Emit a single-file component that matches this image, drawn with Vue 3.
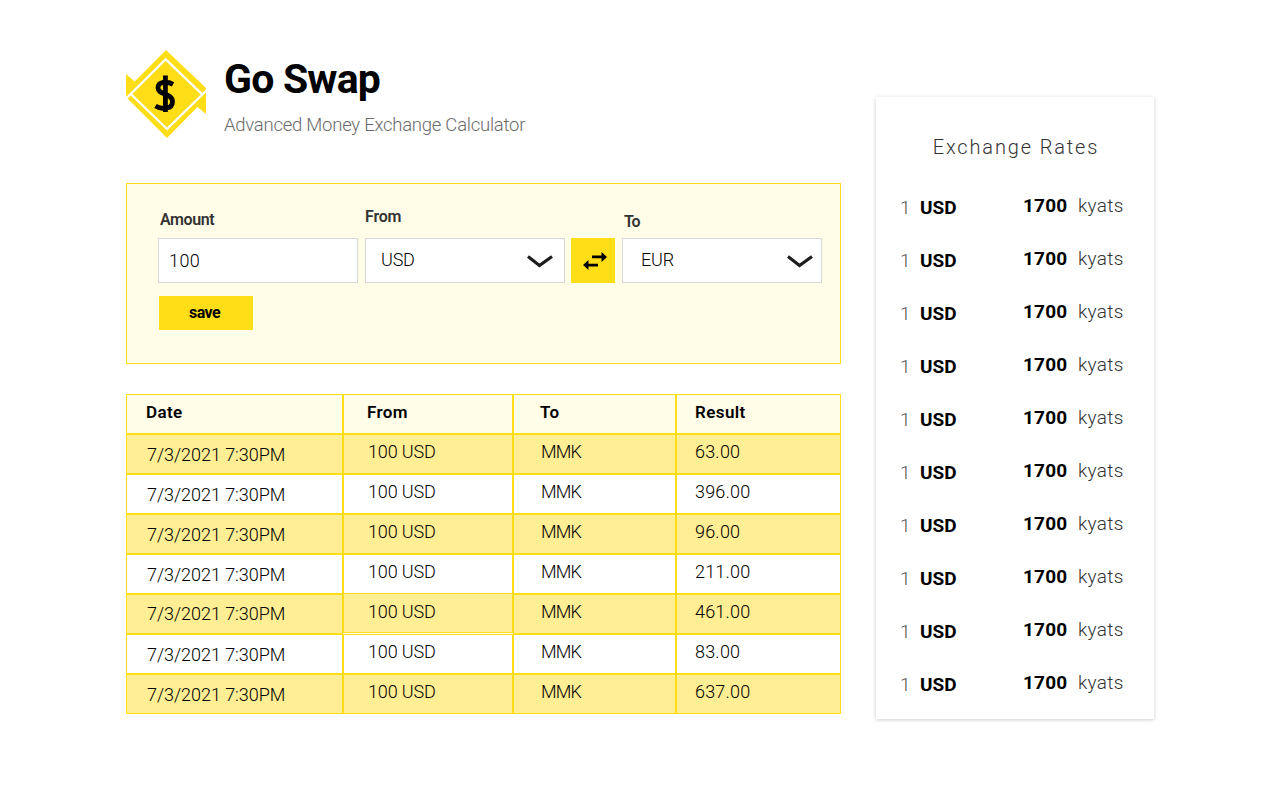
<script setup>
const results = ['63.00', '396.00', '96.00', '211.00', '461.00', '83.00', '637.00']
const history = results.map((result) => ({
  date: '7/3/2021 7:30PM',
  from: '100 USD',
  to: 'MMK',
  result,
}))
const rates = Array.from({ length: 10 }, (_, id) => ({ id, currency: 'USD', value: 1700, unit: 'kyats' }))
</script>

<template>
  <main class="page">
    <section class="main">
      <header class="brand">
        <svg class="logo" viewBox="0 0 80 88" width="80" height="88">
          <path fill="#ffdd17" d="M40 0 80 38 V64 L71.500 57 41 88 0 47 V24 L8.700 31.500Z" />
          <path fill="none" stroke="#fff" stroke-width="2.3" d="M-1 49.500 39.700 9.300 76 44.200" />
          <path fill="none" stroke="#fff" stroke-width="2.3" d="M4.600 43.800 41 79 81 40" />
          <path fill="none" stroke="#000" stroke-width="4.800" d="M47 34.300C41 31 32 31.500 32 38C32 45 46.500 43 46.500 51.500C46.500 59.500 36 60 29.500 56M39.400 25.500V62" />
        </svg>
        <div class="titles">
          <h1>Go Swap</h1>
          <p>Advanced Money Exchange Calculator</p>
        </div>
      </header>

      <form class="converter" @submit.prevent>
        <div class="fields">
          <div class="field amount">
            <label>Amount</label>
            <div class="box">100</div>
          </div>
          <div class="field from">
            <label>From</label>
            <div class="box">
              USD
              <svg viewBox="0 0 26 13" width="26" height="13"><path d="M1 1.500 12.500 10.500 25 1.500" /></svg>
            </div>
          </div>
          <button class="swap" type="button" aria-label="Swap">
            <svg viewBox="0 0 24 20" width="24" height="20">
              <path d="M9 4.500H18.500V1L24 6 18.500 11V7.200H9ZM15 12.800H5.500V9L0 14 5.500 19V15.500H15Z" />
            </svg>
          </button>
          <div class="field to">
            <label>To</label>
            <div class="box">
              EUR
              <svg viewBox="0 0 26 13" width="26" height="13"><path d="M1 1.500 12.500 10.500 25 1.500" /></svg>
            </div>
          </div>
        </div>
        <button class="save" type="submit">save</button>
      </form>

      <div class="table">
        <div class="row head">
          <span>Date</span><span>From</span><span>To</span><span>Result</span>
        </div>
        <div v-for="(entry, i) in history" :key="i" class="row">
          <span class="date">{{ entry.date }}</span>
          <span class="source">{{ entry.from }}</span>
          <span class="target">{{ entry.to }}</span>
          <span class="result">{{ entry.result }}</span>
        </div>
      </div>
    </section>

    <aside class="rates">
      <h2>Exchange Rates</h2>
      <ul>
        <li v-for="rate in rates" :key="rate.id">
          <span class="one">1</span>
          <b class="currency">{{ rate.currency }}</b>
          <b class="value">{{ rate.value }}</b>
          <span class="unit">{{ rate.unit }}</span>
        </li>
      </ul>
    </aside>
  </main>
</template>

<style>
body {
  background: #fff;
}
</style>

<style scoped>
* {
  box-sizing: border-box;
}
.page {
  display: flex;
  align-items: flex-start;
  gap: 35px;
  height: 800px;
  padding: 50px 0 0 126px;
  font-family: Roboto, "Liberation Sans", sans-serif;
  color: #000;
  overflow: hidden;
}
.main {
  width: 715px;
}
.brand {
  display: flex;
  height: 133px;
}
.logo {
  flex: none;
}
.titles {
  padding-left: 18px;
}
h1 {
  margin: 4px 0 0;
  font-size: 41px;
  line-height: 50px;
  font-weight: 700;
  letter-spacing: -0.8px;
}
p {
  margin: 9px 0 0;
  font-size: 18.5px;
  line-height: 24px;
  font-weight: 300;
  letter-spacing: -0.25px;
  color: #6b6b6b;
}
.converter {
  height: 181px;
  padding: 23px 18px 0 31px;
  border: 1px solid #ffdd17;
  background: #fffce7;
}
.fields {
  display: flex;
  align-items: flex-end;
  height: 76px;
}
.field {
  width: 200px;
}
label {
  display: block;
  padding-left: 2px;
  font-size: 16px;
  line-height: 20px;
  font-weight: 600;
  letter-spacing: -0.4px;
  color: #333;
}
.amount label {
  margin-bottom: 8px;
}
.from label {
  margin-bottom: 11px;
  padding-left: 0;
  letter-spacing: -0.2px;
}
.to label {
  margin-bottom: 6px;
  letter-spacing: -1px;
}
.from {
  margin: 0 6px 0 7px;
}
.to {
  margin-left: 7px;
}
.box {
  display: flex;
  align-items: center;
  justify-content: space-between;
  height: 45px;
  padding: 0 8px 2px 15px;
  border: 1px solid #d7d7d7;
  background: #fff;
  font-size: 18px;
  font-weight: 300;
  letter-spacing: -0.2px;
}
.amount .box {
  padding: 0 0 0 10px;
  letter-spacing: 0.4px;
}
.to .box {
  padding-left: 18px;
}
.from .box {
  padding-right: 11px;
}
.box svg {
  margin-top: 4px;
  fill: none;
  stroke: #1d1d1f;
  stroke-width: 3.2;
}
button {
  padding: 0;
  border: 0;
  background: #ffdd17;
  color: #000;
  font-family: inherit;
}
.swap {
  display: flex;
  align-items: center;
  justify-content: center;
  width: 44px;
  height: 45px;
  padding-left: 3px;
}
.save {
  display: block;
  width: 94px;
  height: 34px;
  margin: 13px 0 0 1px;
  padding: 0 3px 2px 0;
  font-size: 16px;
  font-weight: 700;
  letter-spacing: -0.6px;
}
.table {
  margin-top: 30px;
}
.row {
  display: grid;
  grid-template-columns: 217px 170px 163px 165px;
  grid-template-rows: 40px;
  height: 40px;
  font-size: 18px;
  font-weight: 300;
  line-height: 34px;
}
.row > span {
  height: 40px;
  padding-left: 24px;
  border: 1px solid #ffdd17;
  white-space: nowrap;
}
.row:nth-child(even) {
  background: #ffee93;
}
.row .source {
  letter-spacing: -0.15px;
}
.row:nth-child(6) .source {
  margin-top: -1px;
  background: #ffee93;
  box-shadow: 0 1px #fff;
  line-height: 36px;
}
.row > .date {
  padding-left: 20px;
  line-height: 40px;
  letter-spacing: -0.05px;
}
.row:nth-child(6) .date {
  line-height: 38px;
}
.row > .target {
  padding-left: 27px;
  letter-spacing: -0.8px;
}
.row > .result {
  padding-left: 18px;
  letter-spacing: 0.2px;
}
.head {
  background: #fffce7;
  font-size: 17px;
  font-weight: 600;
  letter-spacing: 0.4px;
}
.head > span {
  padding-left: 23px;
}
.head > span:first-child {
  padding-left: 19px;
}
.head > span:nth-child(3) {
  padding-left: 26px;
}
.head > span:nth-child(4) {
  padding-left: 18px;
}
.rates {
  width: 278px;
  height: 622px;
  margin-top: 47px;
  padding-top: 35px;
  background: #fff;
  box-shadow: 0 1px 4px rgba(0, 0, 0, 0.2);
}
h2 {
  margin: 0;
  padding-left: 2px;
  font-size: 20px;
  line-height: 30px;
  font-weight: 300;
  letter-spacing: 1.85px;
  text-align: center;
  color: #333;
}
ul {
  margin: 19px 0 0;
  padding: 0;
  list-style: none;
}
li {
  display: grid;
  grid-template-columns: 20px 103px 55px 60px;
  height: 53px;
  padding-left: 24px;
  font-size: 19px;
  line-height: 53px;
  font-weight: 300;
}
.one {
  color: #555;
}
.currency,
.value {
  font-weight: 700;
}
.value,
.unit {
  line-height: 49px;
}
.value {
  letter-spacing: 0.2px;
}
.unit {
  color: #333;
  letter-spacing: 0.3px;
}
</style>
